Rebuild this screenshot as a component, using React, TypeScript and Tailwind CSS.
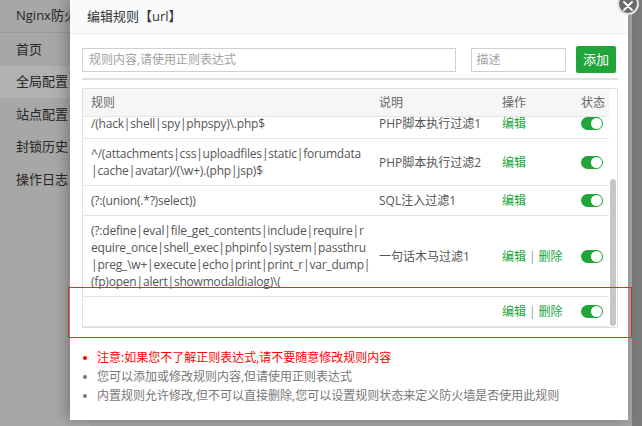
import React from "react";

const FONT = { fontFamily: '"Open Sans", "Noto Sans CJK SC", sans-serif' };

type Rule = {
  lines: string[];
  desc: string;
  canDelete?: boolean;
};

const rules: Rule[] = [
  { lines: ["/(hack|shell|spy|phpspy)\\.php$"], desc: "PHP脚本执行过滤1" },
  {
    lines: ["^/(attachments|css|uploadfiles|static|forumdata", "|cache|avatar)/(\\w+).(php|jsp)$"],
    desc: "PHP脚本执行过滤2",
  },
  { lines: ["(?:(union(.*?)select))"], desc: "SQL注入过滤1" },
  {
    lines: [
      "(?:define|eval|file_get_contents|include|require|r",
      "equire_once|shell_exec|phpinfo|system|passthru",
      "|preg_\\w+|execute|echo|print|print_r|var_dump|",
      "(fp)open|alert|showmodaldialog)\\(",
    ],
    desc: "一句话木马过滤1",
    canDelete: true,
  },
  { lines: [], desc: "", canDelete: true },
];

const menu = ["首页", "全局配置", "站点配置", "封锁历史", "操作日志"];

const Toggle = () => (
  <span className="flex h-[13px] w-[22px] items-center justify-end rounded-full bg-[#20a53a] px-[1px]">
    <span className="h-[11px] w-[11px] rounded-full bg-white" />
  </span>
);

export default function App() {
  return (
    <div className="relative h-[426px] w-[642px] overflow-hidden bg-[#a3a3a3]" style={FONT}>
      {/* page behind the mask */}
      <div className="flex h-full">
        <aside className="w-[90px] bg-[#a7a7a7] text-[13px] text-[#262626]">
          <div className="flex h-[33px] items-center border-b border-[#9a9a9a] pl-[16px] whitespace-nowrap">Nginx防火墙</div>
          {menu.map((m) => (
            <div
              key={m}
              className={`flex h-[32.5px] items-center pl-[16px] ${m === "全局配置" ? "bg-[#b1b1b1]" : ""}`}
            >
              {m}
            </div>
          ))}
        </aside>
        <div className="flex-1" />
        <div className="w-[10px] bg-[#7b7b7b]" />
      </div>

      {/* modal */}
      <div className="absolute left-[70px] top-0 flex h-[420px] w-[558px] flex-col bg-white shadow-[-4px_0_12px_rgba(0,0,0,0.25)]">
        <div className="flex h-[34px] shrink-0 items-center border-b border-[#ececec] bg-[#fafafa] pl-[17px] text-[13px] text-[#333]">
          编辑规则【url】
        </div>

        <div className="flex flex-col px-[12px] pt-[12px]">
          <div className="flex items-center">
            <div className="flex h-[24px] w-[375px] items-center border border-[#d0d0d0] pl-[6px] text-[12px] text-[#a0a0a0]">
              规则内容,请使用正则表达式
            </div>
            <div className="ml-[15px] flex h-[24px] w-[96px] items-center border border-[#d0d0d0] pl-[5px] text-[12px] text-[#a0a0a0]">
              描述
            </div>
            <button className="ml-[10px] flex h-[27px] w-[40px] items-center justify-center rounded-[2px] bg-[#20a53a] text-[13px] text-white">
              添加
            </button>
          </div>

          <div className="mt-[5px] h-[2px] w-[536px] bg-[#e0e0e0]" />

          <div className="mt-[8px] flex h-[240px] w-[536px] border border-[#dedede]">
            <div className="flex flex-1 flex-col text-[12px] text-[#555]">
              <div className="flex h-[28px] shrink-0 items-center border-b border-[#e4e4e4] bg-[#f6f6f6] text-[#666]">
                <div className="w-[288px] pl-[8px]">规则</div>
                <div className="w-[123px] pl-[8px]">说明</div>
                <div className="w-[79px] pl-[8px]">操作</div>
                <div className="flex-1 pl-[8px]">状态</div>
              </div>
              <div className="flex-1 overflow-hidden">
                <div className="-mt-[8px]">
                  {rules.map((r, i) => (
                    <div key={i} className="flex min-h-[30px] items-center border-b border-[#e4e4e4] py-[6px] leading-[17px]">
                      <div className="w-[288px] pl-[8px] tracking-[-0.2px]">
                        {r.lines.map((l) => (
                          <div key={l} className="whitespace-nowrap">{l}</div>
                        ))}
                      </div>
                      <div className="w-[123px] pl-[8px] whitespace-nowrap">{r.desc}</div>
                      <div className="flex w-[79px] items-center pl-[8px] text-[#20a53a]">
                        <span>编辑</span>
                        {r.canDelete && (
                          <>
                            <span className="px-[3px] text-[#999]">|</span>
                            <span>删除</span>
                          </>
                        )}
                      </div>
                      <div className="flex-1 pl-[8px]">
                        <Toggle />
                      </div>
                    </div>
                  ))}
                </div>
              </div>
            </div>
            <div className="flex w-[8px] flex-col items-center pb-[1px]">
              <div className="mt-[90px] w-[6px] flex-1 rounded-[3px] bg-[#c6c6c6]" />
            </div>
          </div>

          <ul className="mt-[21px] flex flex-col gap-[1px] pl-[1px] text-[12px] leading-[18px]">
            <li className="flex items-center text-[#ff0000]">
              <span className="mr-[10px] h-[4px] w-[4px] rounded-full bg-[#ff0000]" />
              注意:如果您不了解正则表达式,请不要随意修改规则内容
            </li>
            <li className="flex items-center text-[#777]">
              <span className="mr-[10px] h-[4px] w-[4px] rounded-full bg-[#777]" />
              您可以添加或修改规则内容,但请使用正则表达式
            </li>
            <li className="flex items-center text-[#777]">
              <span className="mr-[10px] h-[4px] w-[4px] rounded-full bg-[#777]" />
              内置规则允许修改,但不可以直接删除,您可以设置规则状态来定义防火墙是否使用此规则
            </li>
          </ul>
        </div>
      </div>

      {/* close button */}
      <div className="absolute left-[617px] top-[-7px] flex h-[22px] w-[22px] items-center justify-center rounded-full border-2 border-[#e5e5e5] bg-[#6b6b6b]">
        <svg width="10" height="10" viewBox="0 0 10 10" className="mt-[3px]">
          <path d="M1 1L9 9M9 1L1 9" stroke="white" strokeWidth="1.8" strokeLinecap="round" />
        </svg>
      </div>

      {/* annotation box */}
      <div className="absolute left-[68px] top-[287px] h-[51px] w-[564px] border border-solid border-[#f02424]" />
    </div>
  );
}
